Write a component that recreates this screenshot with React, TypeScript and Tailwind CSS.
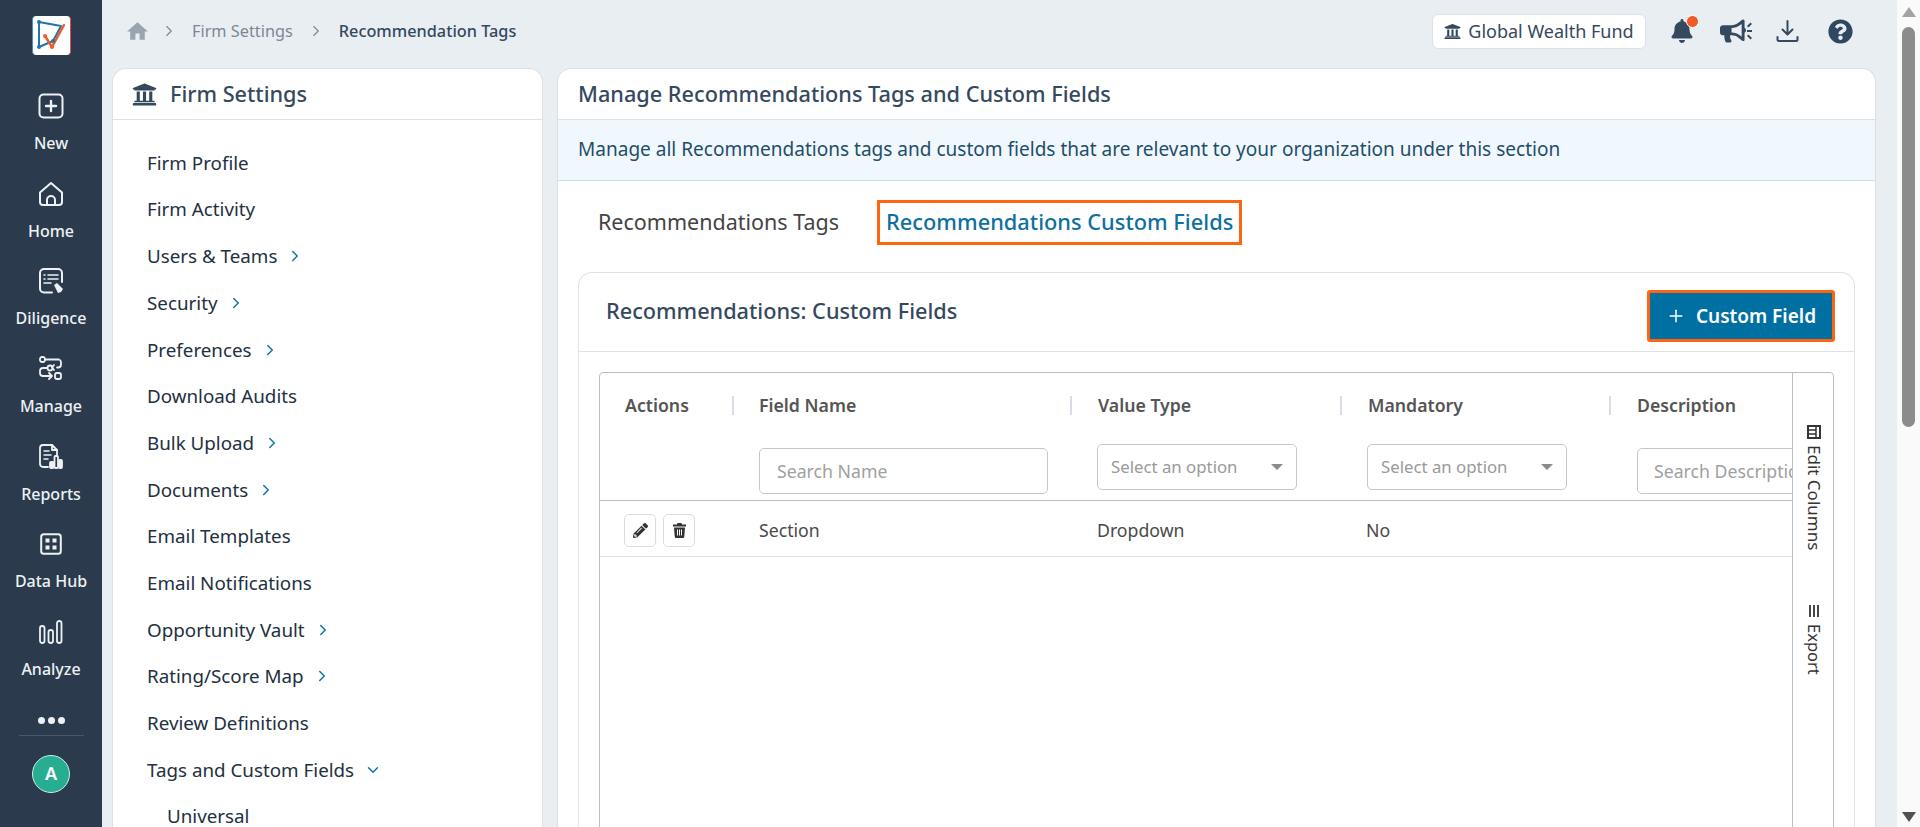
import { ChevronDown, ChevronRight, Plus } from "lucide-react";
import { FaBell, FaBullhorn, FaPencilAlt, FaQuestionCircle, FaUniversity } from "react-icons/fa";
import { MdHome } from "react-icons/md";

// Sidebar icons
function NewIcon() {
  return (
    <svg width="26" height="26" viewBox="0 0 26 26" fill="none" stroke="currentColor" strokeWidth="2" strokeLinecap="round">
      <rect x="1.5" y="1.5" width="23" height="23" rx="4" />
      <path d="M13 8v10M8 13h10" strokeWidth="2.4" />
    </svg>
  );
}

function HomeIcon() {
  return (
    <svg width="26" height="26" viewBox="0 0 26 26" fill="none" stroke="currentColor" strokeWidth="2" strokeLinejoin="round">
      <path d="M2 11.5 13 2l11 9.5V21a3 3 0 0 1-3 3H5a3 3 0 0 1-3-3z" />
      <path d="M9 24v-5a4 4 0 0 1 8 0v5" />
    </svg>
  );
}

function DiligenceIcon() {
  return (
    <svg width="26" height="26" viewBox="0 0 26 26" fill="none" stroke="currentColor" strokeWidth="2" strokeLinecap="round" strokeLinejoin="round">
      <path d="M14 24.500H6a4 4 0 0 1-4-4V5a4 4 0 0 1 4-4h14a4 4 0 0 1 4 4v9" />
      <path d="M6 7h1M10 7h10M6 11h1M10 11h10M6 15h7" strokeWidth="1.6" />
      <path d="m16 17 3-2 6 6-2 3-3 1z" fill="currentColor" stroke="none" />
    </svg>
  );
}

function ManageIcon() {
  return (
    <svg width="24" height="26" viewBox="0 0 24 26" fill="none" stroke="currentColor" strokeWidth="1.8" strokeLinecap="round" strokeLinejoin="round">
      <rect x="1" y="1" width="5" height="5" rx="2" />
      <path d="M6 3.500h14a3 3 0 0 1 2 2.500v3a3 3 0 0 1-3 2.500h-1M15 9l-2 2.500 2 2.500" />
      <circle cx="11" cy="12" r="2.500" />
      <path d="M8 12H4a3 3 0 0 0-3 3v2a3 3 0 0 0 3 3h9M10 17l3 3-3 3" />
      <rect x="16" y="17" width="6" height="6" rx="2" />
    </svg>
  );
}

function ReportsIcon() {
  return (
    <svg width="24" height="26" viewBox="0 0 24 26" fill="none" stroke="currentColor" strokeWidth="1.8" strokeLinecap="round" strokeLinejoin="round">
      <path d="M9 23H4a3 3 0 0 1-3-3V4a3 3 0 0 1 3-3h9l5 5v5" />
      <path d="M13 1v5h5" />
      <path d="M5 7h5M5 11h7M5 15h4" strokeWidth="1.5" />
      <rect x="11" y="18" width="3.500" height="6" rx="1" fill="currentColor" />
      <rect x="15.500" y="12" width="3.500" height="12" rx="1" />
      <rect x="20" y="16" width="3" height="8" rx="1" fill="currentColor" />
    </svg>
  );
}

function DataHubIcon() {
  return (
    <svg width="22" height="22" viewBox="0 0 22 22" fill="none">
      <rect x="1.200" y="1.200" width="19.600" height="19.600" rx="2.500" stroke="currentColor" strokeWidth="2" />
      <rect x="5.500" y="5.500" width="4" height="4" fill="currentColor" />
      <rect x="12.500" y="5.500" width="4" height="4" fill="currentColor" />
      <rect x="5.500" y="12.500" width="4" height="4" fill="currentColor" />
      <rect x="12.500" y="12.500" width="4" height="4" fill="currentColor" />
    </svg>
  );
}

function AnalyzeIcon() {
  return (
    <svg width="24" height="24" viewBox="0 0 24 24" fill="none" stroke="currentColor" strokeWidth="1.800">
      <rect x="1" y="6" width="4.500" height="17" rx="2.250" />
      <rect x="9.500" y="10" width="4.500" height="13" rx="2.250" />
      <rect x="18" y="1" width="4.500" height="22" rx="2.250" />
    </svg>
  );
}

const navItems = [
  { label: "New", icon: <NewIcon /> },
  { label: "Home", icon: <HomeIcon /> },
  { label: "Diligence", icon: <DiligenceIcon /> },
  { label: "Manage", icon: <ManageIcon /> },
  { label: "Reports", icon: <ReportsIcon /> },
  { label: "Data Hub", icon: <DataHubIcon /> },
  { label: "Analyze", icon: <AnalyzeIcon /> },
];

const settingsItems = [
  { label: "Firm Profile" },
  { label: "Firm Activity" },
  { label: "Users & Teams", arrow: true },
  { label: "Security", arrow: true },
  { label: "Preferences", arrow: true },
  { label: "Download Audits" },
  { label: "Bulk Upload", arrow: true },
  { label: "Documents", arrow: true },
  { label: "Email Templates" },
  { label: "Email Notifications" },
  { label: "Opportunity Vault", arrow: true },
  { label: "Rating/Score Map", arrow: true },
  { label: "Review Definitions" },
  { label: "Tags and Custom Fields", open: true },
];

function Sidebar() {
  return (
    <aside className="w-[102px] shrink-0 bg-[#2b3b4d] text-[#eef1f4] flex flex-col items-center pt-4">
      {/* Logo */}
      <div className="w-[39px] h-[39px] bg-white rounded-[4px] border-r border-r-[#d8534a] border-l border-l-[#3f8fc9] flex items-center justify-center">
        <svg width="33" height="33" viewBox="0 0 33 33" fill="none">
          <path d="M4 3 26 7 18 22 4 28z" stroke="#1f76a8" strokeWidth="2" strokeLinejoin="round" />
          <path d="M10 17l7 11L29 6" stroke="#ee5a24" strokeWidth="2.400" strokeLinecap="round" strokeLinejoin="round" />
          <circle cx="4" cy="3" r="2" fill="#1f76a8" />
          <circle cx="18" cy="22" r="2" fill="#1f76a8" />
          <circle cx="4" cy="28" r="2" fill="#1f76a8" />
          <circle cx="10" cy="17" r="2" fill="#ee5a24" />
          <circle cx="17" cy="28" r="2" fill="#ee5a24" />
        </svg>
      </div>
      <nav className="mt-[38px] w-full flex flex-col">
        {navItems.map((item) => (
          <div key={item.label} className="h-[87.700px] flex flex-col items-center">
            <div className="h-[26px] flex items-center justify-center">{item.icon}</div>
            <div className="mt-[13px] text-[16px] leading-[22px] font-medium whitespace-nowrap">{item.label}</div>
          </div>
        ))}
      </nav>
      <div className="flex gap-[3px] mt-[10px]">
        <span className="w-[7px] h-[7px] rounded-full bg-[#eef1f4]" />
        <span className="w-[7px] h-[7px] rounded-full bg-[#eef1f4]" />
        <span className="w-[7px] h-[7px] rounded-full bg-[#eef1f4]" />
      </div>
      <div className="w-[65px] h-px bg-[#46586e] mt-[11px]" />
      <div className="mt-[19px] w-[38px] h-[38px] rounded-full bg-[#27ae92] border border-[#cfeee7] flex items-center justify-center text-white font-semibold text-[18px]">
        A
      </div>
    </aside>
  );
}

function TopBar() {
  return (
    <header className="h-[68px] shrink-0 flex items-center pl-[23px] pr-[44px] pb-[6px]">
      <MdHome className="text-[#98a4b0] text-[25px]" />
      <ChevronRight className="ml-[10px] text-[#7b8794]" size={18} strokeWidth={1.500} />
      <span className="ml-[14px] text-[16.300px] text-[#7b8794]">Firm Settings</span>
      <ChevronRight className="ml-[14px] text-[#7b8794]" size={18} strokeWidth={1.500} />
      <span className="ml-[14px] text-[16.300px] font-medium text-[#34495e]">Recommendation Tags</span>
      <div className="ml-auto flex items-center">
        <div className="h-[35px] w-[214px] bg-white border border-[#dde1e6] rounded-[6px] flex items-center justify-center gap-[7px] text-[#34495e] text-[18px]">
          <FaUniversity className="text-[17px]" />
          Global Wealth Fund
        </div>
        <div className="relative ml-[24px] text-[#34495e]">
          <FaBell className="text-[24px]" />
          <span className="absolute -top-[4px] right-[-5px] w-[13px] h-[13px] rounded-full bg-[#f15a24] border border-white" />
        </div>
        <FaBullhorn className="ml-[26px] text-[26px] text-[#34495e]" />
        <span className="ml-[1px] w-[5px] h-[14px] flex flex-col justify-between">
          <span className="w-[5px] h-[2px] bg-[#34495e] -rotate-45" />
          <span className="w-[5px] h-[2px] bg-[#34495e]" />
          <span className="w-[5px] h-[2px] bg-[#34495e] rotate-45" />
        </span>
        <svg className="ml-[24px] text-[#34495e]" width="23" height="22" viewBox="0 0 23 22" fill="none" stroke="currentColor" strokeWidth="2" strokeLinecap="round" strokeLinejoin="round">
          <path d="M11.500 1v13M6.500 9.500l5 5 5-5" />
          <path d="M1.500 17v2.500a1.500 1.500 0 0 0 1.500 1.500h17a1.500 1.500 0 0 0 1.500-1.500V17" />
        </svg>
        <FaQuestionCircle className="ml-[29px] text-[25px] text-[#2f4760]" />
      </div>
    </header>
  );
}

function SettingsCard() {
  return (
    <section className="w-[431px] shrink-0 bg-white border border-[#dde1e6] border-b-0 rounded-t-[14px] overflow-hidden">
      <div className="h-[51px] border-b border-[#dfe2e6] flex items-center pl-[19px] gap-[13px]">
        <FaUniversity className="text-[25px] text-[#34495e]" />
        <span className="text-[21.700px] font-medium text-[#34495e]">Firm Settings</span>
      </div>
      <ul className="pt-[19.500px]">
        {settingsItems.map((item) => (
          <li key={item.label} className="h-[46.700px] flex items-center pl-[34px] text-[18.800px] text-[#22303f]">
            {item.label}
            {item.arrow && <ChevronRight className="ml-[9px] text-[#0f76a8]" size={18} strokeWidth={2} />}
            {item.open && <ChevronDown className="ml-[10px] text-[#0f76a8]" size={18} strokeWidth={2} />}
          </li>
        ))}
        <li className="h-[46.700px] flex items-center pl-[54px] text-[18.800px] text-[#22303f]">Universal</li>
      </ul>
    </section>
  );
}

function SelectBox() {
  return (
    <div className="w-[200px] h-[46px] border border-[#c4c8cc] rounded-[5px] bg-white flex items-center justify-between pl-[13px] pr-[13px] text-[16.800px] text-[#9a9a9a]">
      Select an option
      <span className="w-0 h-0 border-x-[6px] border-x-transparent border-t-[6px] border-t-[#8a8a8a]" />
    </div>
  );
}

function ColumnHead({ label, className }: { label: string; className: string }) {
  return (
    <div className={`${className} shrink-0 h-full flex items-center font-semibold text-[17.700px] text-[#555555]`}>
      <span className="flex-1 whitespace-nowrap">{label}</span>
      <span className="w-[2px] h-[19px] bg-[#d6dde8]" />
    </div>
  );
}

function CustomFieldsTable() {
  return (
    <div className="mt-[20px] ml-[20px] mr-[20px] h-[500px] border border-[#b9bec6] rounded-t-[4px] flex overflow-hidden">
      <div className="flex-1 min-w-0 overflow-hidden">
        {/* Header */}
        <div className="h-[63px] flex mt-[1px]">
          <ColumnHead label="Actions" className="w-[134px] pl-[25px]" />
          <ColumnHead label="Field Name" className="w-[338px] pl-[25px]" />
          <ColumnHead label="Value Type" className="w-[270px] pl-[26px]" />
          <ColumnHead label="Mandatory" className="w-[269px] pl-[26px]" />
          <div className="shrink-0 pl-[26px] flex items-center font-semibold text-[17.700px] text-[#555555]">Description</div>
        </div>
        {/* Filters */}
        <div className="h-[64px] flex items-start border-b border-[#b9bec6] w-[1400px]">
          <div className="w-[135px] shrink-0" />
          <div className="w-[337px] shrink-0 pl-[24px] pt-[11px]">
            <div className="w-[289px] h-[46px] border border-[#c4c8cc] rounded-[5px] flex items-center pl-[17px] text-[17.700px] text-[#a0a0a0]">
              Search Name
            </div>
          </div>
          <div className="w-[270px] shrink-0 pl-[25px] pt-[7px]"><SelectBox /></div>
          <div className="w-[270px] shrink-0 pl-[25px] pt-[7px]"><SelectBox /></div>
          <div className="shrink-0 pl-[25px] pt-[11px]">
            <div className="w-[200px] h-[46px] border border-[#c4c8cc] rounded-[5px] flex items-center pl-[16px] text-[17.700px] text-[#a0a0a0] whitespace-nowrap">
              Search Description
            </div>
          </div>
        </div>
        {/* Row */}
        <div className="h-[56px] flex items-center border-b border-[#dcdfe8] text-[17.700px] text-[#4a4a4a] w-[1400px] pt-[3px]">
          <div className="w-[135px] shrink-0 pl-[24px] flex gap-[7px]">
            <button className="w-[32px] h-[33px] border border-[#d9dce1] rounded-[5px] flex items-center justify-center text-[#333333]">
              <FaPencilAlt className="text-[15px]" />
            </button>
            <button className="w-[32px] h-[33px] border border-[#d9dce1] rounded-[5px] flex items-center justify-center text-[#333333]">
              <svg width="13" height="15" viewBox="0 0 13 15" fill="currentColor">
                <path d="M4.500 0h4l.5 1.500H13v2H0v-2h4z" />
                <path d="M1 4.500h11l-.7 9a1.500 1.500 0 0 1-1.500 1.500H3.200a1.500 1.500 0 0 1-1.500-1.500zM4 6.500v6h1v-6zm2 0v6h1v-6zm2 0v6h1v-6z" fillRule="evenodd" />
              </svg>
            </button>
          </div>
          <div className="w-[337px] shrink-0 pl-[24px]">Section</div>
          <div className="w-[270px] shrink-0 pl-[25px]">Dropdown</div>
          <div className="w-[269px] shrink-0 pl-[24px]">No</div>
        </div>
      </div>
      {/* Side tools */}
      <div className="w-[41px] shrink-0 border-l border-[#b9bec6] flex flex-col items-center pt-[52px] pl-[2px] text-[#333333]">
        <div className="[writing-mode:vertical-rl] flex items-center gap-[6px] whitespace-nowrap text-[17px]">
          <svg width="14" height="14" viewBox="0 0 14 14" className="rotate-90" fill="none" stroke="#333333">
            <rect x="1" y="1" width="12" height="12" strokeWidth="2" />
            <path d="M1 5h12M5 5v8M9 5v8" strokeWidth="1.500" />
          </svg>
          Edit Columns
        </div>
        <div className="mt-[55px] [writing-mode:vertical-rl] flex items-center gap-[7px] whitespace-nowrap text-[16.500px]">
          <svg width="14" height="12" viewBox="0 0 14 12" className="rotate-90" stroke="#333333" strokeWidth="1.800">
            <path d="M1 2h12M1 6h12M1 10h12" />
          </svg>
          Export
        </div>
      </div>
    </div>
  );
}

function ManageCard() {
  return (
    <section className="flex-1 min-w-0 bg-white border border-[#dde1e6] border-b-0 rounded-t-[14px] overflow-hidden">
      <div className="h-[51px] border-b border-[#dfe2e6] flex items-center pl-[20px] text-[21.700px] font-medium text-[#34495e]">
        Manage Recommendations Tags and Custom Fields
      </div>
      <div className="h-[61px] bg-[#f1f8fd] border-b border-[#bfe6ee] flex items-center pl-[20px] pb-[2px] text-[19.050px] text-[#1f4e6b]">
        Manage all Recommendations tags and custom fields that are relevant to your organization under this section
      </div>
      {/* Tabs */}
      <div className="flex items-center pl-[40px] mt-[19px] h-[45px]">
        <span className="text-[21.500px] text-[#444444]">Recommendations Tags</span>
        <span className="ml-[38px] h-[45px] px-[6px] flex items-center border-[3px] border-[#ff6410] text-[21.800px] font-medium text-[#0f6f9f] whitespace-nowrap">
          Recommendations Custom Fields
        </span>
      </div>
      {/* Inner card */}
      <div className="mt-[27px] ml-[20px] mr-[20px] border border-[#dfe2e6] border-b-0 rounded-t-[14px] h-[600px] overflow-hidden">
        <div className="h-[79px] border-b border-[#dfe2e6] flex items-center justify-between pl-[27px] pr-[19px]">
          <span className="text-[21.700px] font-medium text-[#34495e] pb-[2px]">Recommendations: Custom Fields</span>
          <button className="w-[188px] h-[52px] mt-[8px] bg-[#0070a3] border-[3px] border-[#ff6410] rounded-[3px] flex items-center justify-center gap-[10px] text-white text-[19px] font-semibold">
            <Plus size={20} strokeWidth={1.800} />
            Custom Field
          </button>
        </div>
        <CustomFieldsTable />
      </div>
    </section>
  );
}

function Scrollbar() {
  return (
    <div className="w-[23px] shrink-0 bg-[#fafafa] flex flex-col items-center pt-[7px] pb-[5px]">
      <span className="w-0 h-0 border-x-[7px] border-x-transparent border-b-[10px] border-b-[#a3a3a3]" />
      <div className="mt-[10px] w-[13px] h-[400px] rounded-full bg-[#8c8c8c]" />
      <span className="mt-auto w-0 h-0 border-x-[7px] border-x-transparent border-t-[10px] border-t-[#505050]" />
    </div>
  );
}

export default function App() {
  return (
    <div className="h-screen flex overflow-hidden bg-[#e9eef3] font-['Noto_Sans','Open_Sans',sans-serif]">
      <Sidebar />
      <main className="flex-1 min-w-0 flex flex-col">
        <TopBar />
        <div className="flex-1 min-h-0 flex gap-[14px] pl-[10px] pr-[21px]">
          <SettingsCard />
          <ManageCard />
        </div>
      </main>
      <Scrollbar />
    </div>
  );
}
